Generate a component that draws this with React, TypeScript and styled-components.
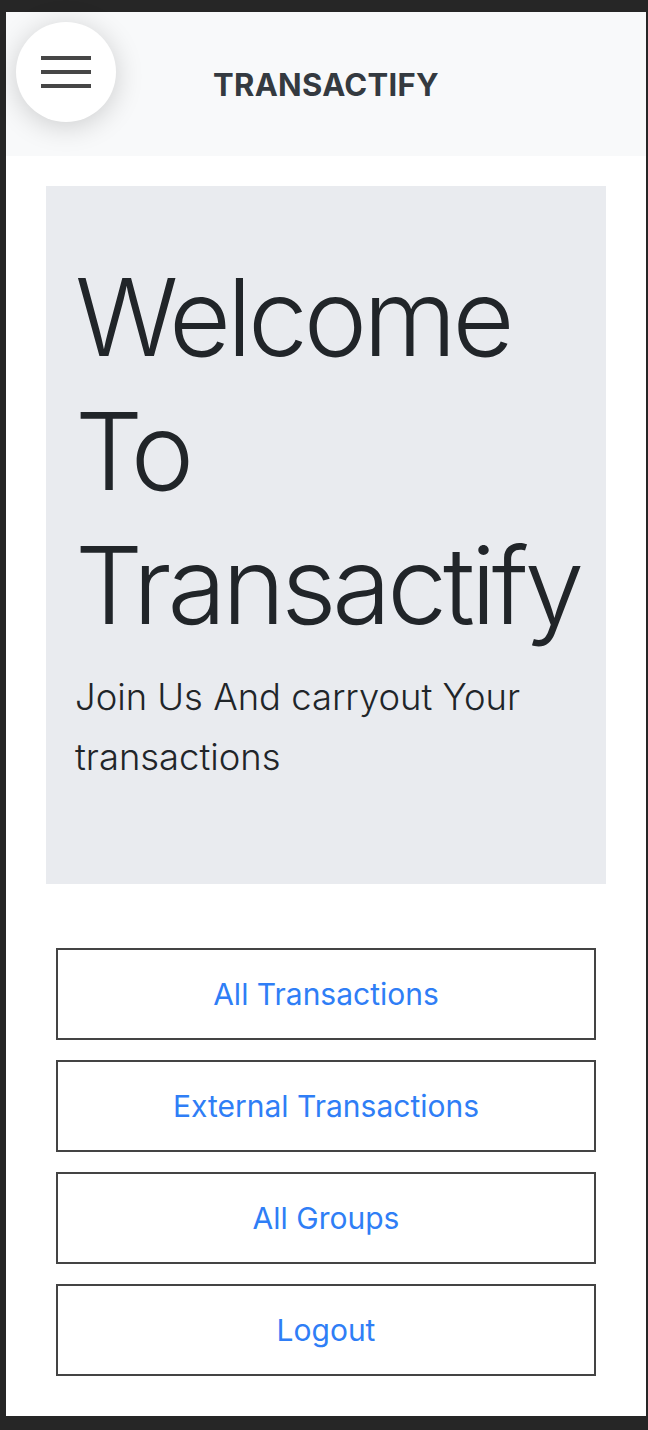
import React from "react";
import styled, { createGlobalStyle } from "styled-components";

const GlobalStyle = createGlobalStyle`
  html, body {
    margin: 0;
    padding: 0;
    background: #262626;
  }
  * { box-sizing: border-box; }
  body {
    font-family: Inter, "Noto Sans", "Liberation Sans", sans-serif;
    color: #212529;
  }
`;

const Frame = styled.div`
  padding: 12px 2px 14px 6px;
  background: #262626;
`;

const Page = styled.div`
  position: relative;
  width: 640px;
  height: 1404px;
  background: #ffffff;
  display: flex;
  flex-direction: column;
`;

const Header = styled.header`
  height: 144px;
  background: #f8f9fa;
  display: flex;
  align-items: center;
  justify-content: center;
`;

const Brand = styled.h2`
  margin: 0;
  font-size: 31px;
  font-weight: 700;
  letter-spacing: 0.3px;
  color: #343a40;
`;

const MenuButton = styled.button`
  position: absolute;
  top: 10px;
  left: 10px;
  width: 100px;
  height: 100px;
  border-radius: 50%;
  border: none;
  background: #ffffff;
  box-shadow: 0 4px 28px rgba(0, 0, 0, 0.18);
  display: flex;
  flex-direction: column;
  align-items: center;
  justify-content: center;
  gap: 10px;
  padding: 0;
`;

const Bar = styled.span`
  display: block;
  width: 50px;
  height: 4px;
  background: #464646;
`;

const Hero = styled.section`
  margin: 30px 40px 0;
  height: 698px;
  background: #e9ebef;
  padding: 64px 32px 0 29px;
`;

const Title = styled.h1`
  margin: 0;
  font-size: 107px;
  font-weight: 300;
  line-height: 134px;
  letter-spacing: -4px;
  color: #212529;
`;

const Lead = styled.p`
  margin: 15px 0 0 0;
  font-size: 36.4px;
  font-weight: 300;
  line-height: 60px;
  color: #212529;
`;

const Actions = styled.nav`
  margin: 64px 50px 0;
  display: flex;
  flex-direction: column;
  gap: 20px;
`;

const ActionButton = styled.a`
  height: 92px;
  border: 2px solid #444444;
  display: flex;
  align-items: center;
  justify-content: center;
  font-size: 30px;
  color: #2f7ef6;
  text-decoration: none;
  background: #ffffff;
`;

const links = ["All Transactions", "External Transactions", "All Groups", "Logout"];

export default function App() {
  return (
    <>
      <GlobalStyle />
      <Frame>
        <Page>
          <Header>
            <Brand>TRANSACTIFY</Brand>
          </Header>
          <MenuButton aria-label="Menu">
            <Bar />
            <Bar />
            <Bar />
          </MenuButton>
          <Hero>
            <Title>Welcome To Transactify</Title>
            <Lead>Join Us And carryout Your transactions</Lead>
          </Hero>
          <Actions>
            {links.map((l) => (
              <ActionButton key={l} href="#">
                {l}
              </ActionButton>
            ))}
          </Actions>
        </Page>
      </Frame>
    </>
  );
}
